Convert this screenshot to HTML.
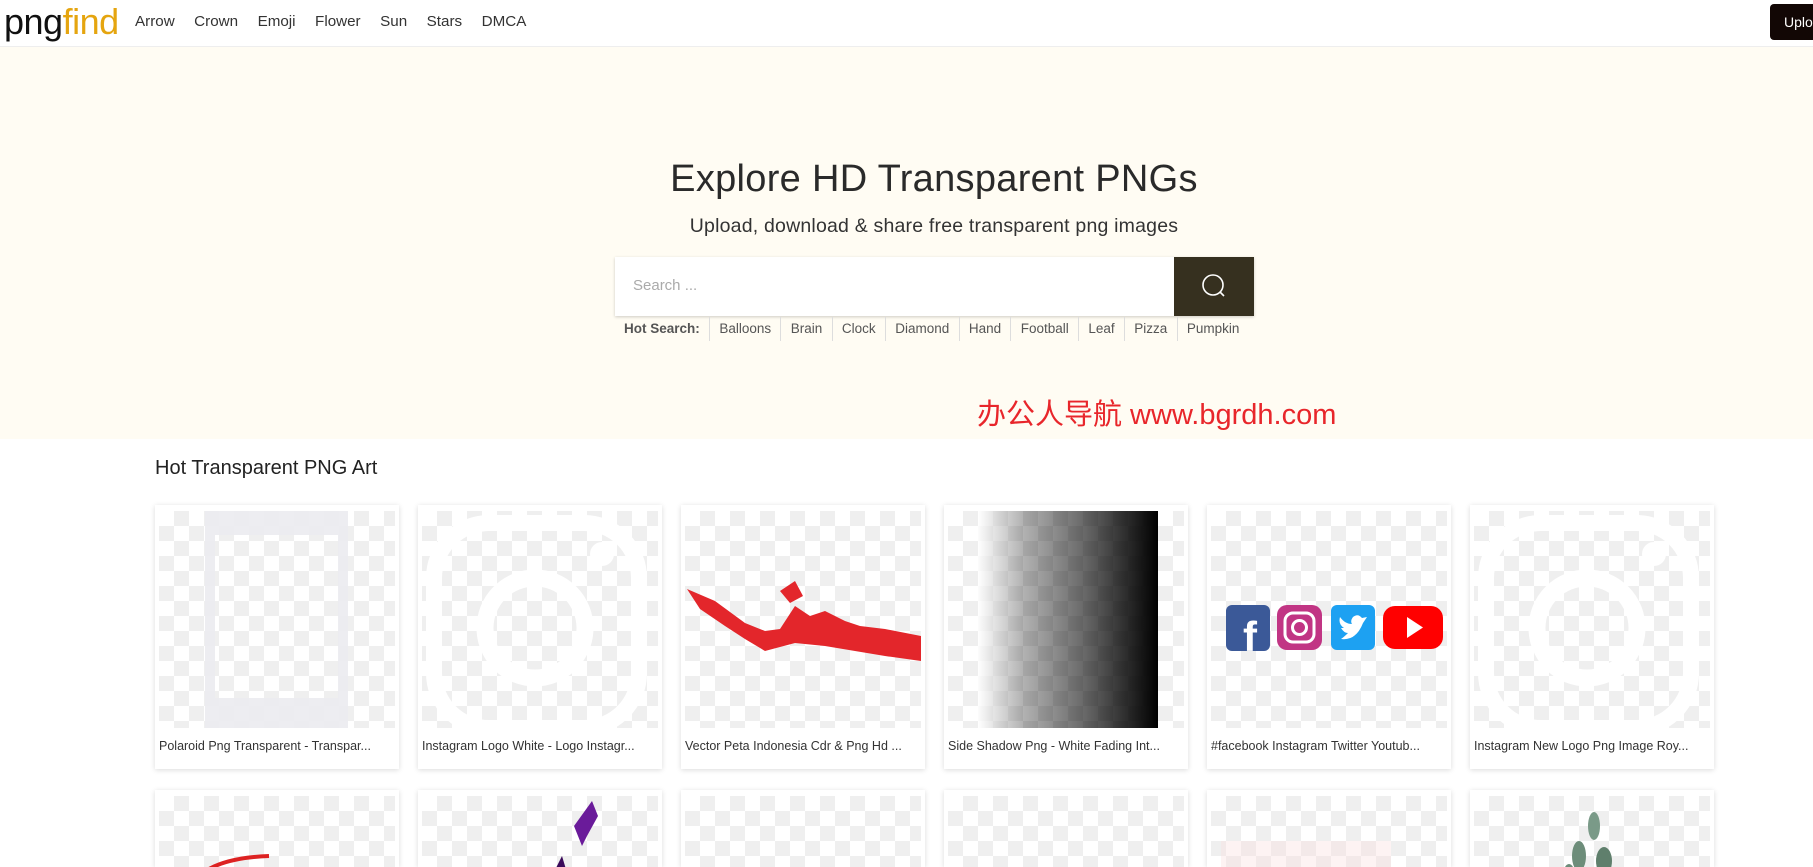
<!DOCTYPE html>
<html><head><meta charset="utf-8"><style>
*{margin:0;padding:0;box-sizing:border-box}
html{width:1813px;height:867px;overflow:hidden}
body{width:1813px;height:867px;overflow:hidden;background:#fff;font-family:"Liberation Sans",sans-serif;position:relative;color:#222}
.nav{position:absolute;left:0;top:0;width:1813px;height:47px;background:#fff;border-bottom:1px solid #eee}
.logo{position:absolute;left:4px;top:1px;font-size:36px;letter-spacing:-0.5px;color:#111}
.logo span{color:#e5a50f}
.links{position:absolute;left:135px;top:13px;font-size:15.2px;color:#333}
.links a{margin-right:19.5px;text-decoration:none;color:#333}
.up{position:absolute;left:1770px;top:4px;width:60px;height:36px;background:#120705;border-radius:4px;color:#fff;font-size:14px;padding:10px 0 0 14px}
.hero{position:absolute;left:0;top:47px;width:1813px;height:392px;background:#fffcf3}
h1{position:absolute;left:0;width:1868px;top:158px;text-align:center;font-weight:normal;font-size:38px;color:#2a2a2a;letter-spacing:0.3px}
.sub{position:absolute;left:0;width:1868px;top:215px;text-align:center;font-size:19.5px;color:#333;letter-spacing:0.2px}
.search{position:absolute;left:615px;top:257px;width:639px;height:59px;background:#fff;box-shadow:0 1px 3px rgba(0,0,0,.2)}
.search .ph{position:absolute;left:18px;top:20px;font-size:15px;color:#aaa}
.search .btn{position:absolute;right:0;top:0;width:80px;height:59px;background:#36301f}
.hot{position:absolute;left:615px;top:317px;height:24px;font-size:13.5px;color:#555;display:flex}
.hot span{padding:4px 9.3px 0;border-right:1px solid #ddd;height:24px}
.hot span:last-child{border:none}
.red{position:absolute;left:977px;top:391px;font-size:29px;color:#e8262b;font-family:"Liberation Sans","Noto Sans CJK SC",sans-serif}
.h2{position:absolute;left:155px;top:457px;font-size:20px;color:#222}
.card{position:absolute;width:244px;height:264px;background:#fff;box-shadow:0 1px 5px rgba(0,0,0,.15)}
.img{position:absolute;left:4px;top:6px;width:236px;height:217px;overflow:hidden;background-color:#fff;background-image:linear-gradient(45deg,#efefef 25%,transparent 25%,transparent 75%,#efefef 75%),linear-gradient(45deg,#efefef 25%,transparent 25%,transparent 75%,#efefef 75%);background-size:30px 30px;background-position:0 0,15px 15px}
.cap{position:absolute;left:4px;top:234px;font-size:12.5px;color:#333;white-space:nowrap}
</style></head><body>
<div class="nav"><div class="logo">png<span>find</span></div>
<div class="links"><a>Arrow</a><a>Crown</a><a>Emoji</a><a>Flower</a><a>Sun</a><a>Stars</a><a>DMCA</a></div>
<div class="up">Upload</div></div>
<div class="hero"></div>
<h1>Explore HD Transparent PNGs</h1>
<div class="sub">Upload, download &amp; share free transparent png images</div>
<div class="search"><div class="ph">Search ...</div><div class="btn"><svg width="80" height="59"><circle cx="39" cy="28" r="10" fill="none" stroke="#fff" stroke-width="1.6"/><line x1="46" y1="35" x2="50" y2="39" stroke="#fff" stroke-width="1.6"/></svg></div></div>
<div class="hot"><span style="font-weight:bold;padding-left:9px">Hot Search:</span><span>Balloons</span><span>Brain</span><span>Clock</span><span>Diamond</span><span>Hand</span><span>Football</span><span>Leaf</span><span>Pizza</span><span>Pumpkin</span></div>
<div class="red">办公人导航 www.bgrdh.com</div>
<div class="h2">Hot Transparent PNG Art</div>

<div class="card" style="left:155px;top:505px"><div class="img"><div style="position:absolute;left:46px;top:0;width:143px;height:217px;border:10px solid rgba(235,235,240,.9);border-bottom-width:30px;border-top-width:24px"></div></div><div class="cap">Polaroid Png Transparent - Transpar...</div></div>
<div class="card" style="left:418px;top:505px"><div class="img"><svg width="236" height="217"><rect x="12" y="12" width="205" height="205" rx="55" fill="none" stroke="#fff" stroke-width="16"/><circle cx="113" cy="117" r="50" fill="none" stroke="#fff" stroke-width="17"/><circle cx="180" cy="43" r="12" fill="#fff"/></svg></div><div class="cap">Instagram Logo White - Logo Instagr...</div></div>
<div class="card" style="left:681px;top:505px"><div class="img"><svg width="236" height="217"><path d="M2 78 L30 90 L60 112 L80 120 L95 118 L110 95 L125 105 L140 100 L160 110 L175 115 L200 118 L236 125 L236 150 L200 145 L170 140 L140 135 L110 132 L80 140 L60 128 L40 115 L15 98 Z" fill="#e3262b"/><path d="M95 80 L110 70 L118 85 L105 92Z" fill="#e3262b"/></svg></div><div class="cap">Vector Peta Indonesia Cdr &amp; Png Hd ...</div></div>
<div class="card" style="left:944px;top:505px"><div class="img"><div style="position:absolute;left:30px;top:0;width:180px;height:217px;background:linear-gradient(90deg,rgba(255,255,255,.8),rgba(0,0,0,.3) 25%,rgba(0,0,0,.6) 60%,#000 100%)"></div></div><div class="cap">Side Shadow Png - White Fading Int...</div></div>
<div class="card" style="left:1207px;top:505px"><div class="img"><svg width="236" height="217"><rect x="15" y="94" width="44" height="46" rx="6" fill="#3b5998"/><text x="32" y="140" fill="#fff" font-size="42" font-weight="bold" font-family="Liberation Sans">f</text><rect x="66" y="94" width="45" height="45" rx="10" fill="#c13584"/><rect x="74" y="102" width="29" height="29" rx="8" fill="none" stroke="#fff" stroke-width="3"/><circle cx="88.5" cy="116.5" r="7" fill="none" stroke="#fff" stroke-width="3"/><rect x="120" y="94" width="44" height="45" rx="6" fill="#1da1f2"/><path d="M130 128 Q145 130 152 112 L156 106 L151 107 Q147 102 142 106 Q139 110 141 113 Q134 113 129 106 Q127 113 133 117 L130 117 Q133 122 137 122 Q133 126 130 128Z" fill="#fff"/><rect x="172" y="95" width="60" height="43" rx="12" fill="#f00"/><path d="M196 106 L212 116.5 L196 127Z" fill="#fff"/></svg></div><div class="cap">#facebook Instagram Twitter Youtub...</div></div>
<div class="card" style="left:1470px;top:505px"><div class="img"><svg width="236" height="217"><rect x="12" y="12" width="205" height="205" rx="55" fill="none" stroke="#fff" stroke-width="16"/><circle cx="113" cy="117" r="50" fill="none" stroke="#fff" stroke-width="17"/><circle cx="180" cy="43" r="12" fill="#fff"/></svg></div><div class="cap">Instagram New Logo Png Image Roy...</div></div>

<div class="card" style="left:155px;top:790px;height:77px"><div class="img" style="height:71px"><svg width="236" height="80"><path d="M40 80 Q60 62 110 60" stroke="#d22" stroke-width="4" fill="none"/></svg></div></div>
<div class="card" style="left:418px;top:790px;height:77px"><div class="img" style="height:71px"><svg width="236" height="80"><path d="M170 5 L176 20 L165 40 L160 50 L152 30Z" fill="#6a1b9a"/><path d="M140 60 L146 80 L130 80Z" fill="#3a0a5a"/></svg></div></div>
<div class="card" style="left:681px;top:790px;height:77px"><div class="img" style="height:71px"></div></div>
<div class="card" style="left:944px;top:790px;height:77px"><div class="img" style="height:71px"></div></div>
<div class="card" style="left:1207px;top:790px;height:77px"><div class="img" style="height:71px"><div style="position:absolute;left:10px;top:45px;width:170px;height:40px;background:rgba(250,225,225,.4)"></div></div></div>
<div class="card" style="left:1470px;top:790px;height:77px"><div class="img" style="height:71px"><svg width="236" height="80"><ellipse cx="120" cy="30" rx="6" ry="14" fill="#7a9a88"/><ellipse cx="105" cy="60" rx="7" ry="15" fill="#6d8d7a"/><ellipse cx="130" cy="65" rx="8" ry="14" fill="#5f7f6c"/><ellipse cx="95" cy="80" rx="6" ry="12" fill="#6d8d7a"/></svg></div></div>
</body></html>
